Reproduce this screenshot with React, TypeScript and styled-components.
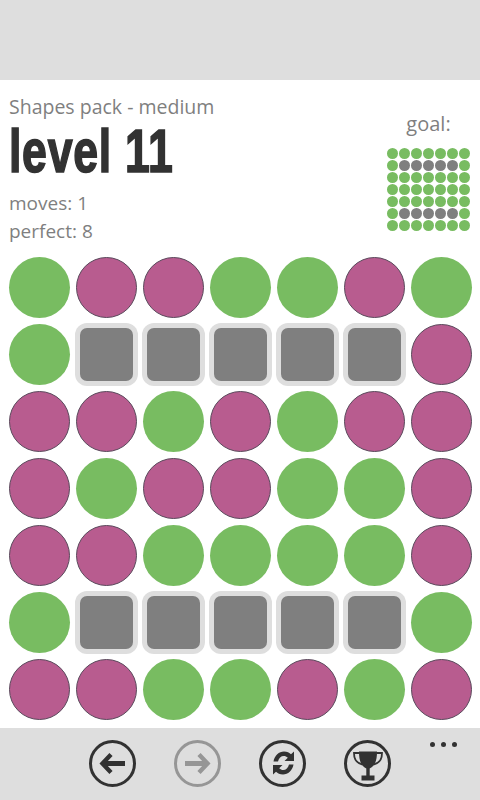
import React from "react";
import styled, { createGlobalStyle } from "styled-components";

const Global = createGlobalStyle`
  html, body { margin: 0; padding: 0; background: #fff; }
  body { font-family: "Open Sans", "Noto Sans", sans-serif; }
`;

const Phone = styled.div`
  width: 480px;
  height: 800px;
  display: flex;
  flex-direction: column;
  overflow: hidden;
  background: #fff;
`;
const StatusBar = styled.div`
  flex: 0 0 80px;
  background: #dedede;
`;
const Content = styled.main`
  flex: 1;
  display: flex;
  flex-direction: column;
`;
const Header = styled.header`
  height: 177px;
  display: flex;
  justify-content: space-between;
  padding: 0 10px 0 9px;
`;
const Info = styled.div`
  display: flex;
  flex-direction: column;
`;
const Pack = styled.div`
  margin-top: 14px;
  font-size: 19.5px;
  line-height: 26px;
  color: #7f7f7f;
`;
const Title = styled.h1`
  margin: 0 0 7px;
  height: 62px;
  font-family: "Liberation Sans", sans-serif;
  font-weight: 700;
  font-size: 62px;
  line-height: 62px;
  letter-spacing: 1px;
  color: #323232;
  -webkit-text-stroke: 1.7px #323232;
  transform: scaleX(0.72);
  transform-origin: left center;
  white-space: nowrap;
`;
const Stat = styled.div`
  font-size: 19px;
  line-height: 28px;
  color: #7f7f7f;
`;
const Goal = styled.aside`
  width: 83px;
  display: flex;
  flex-direction: column;
  align-items: center;
`;
const GoalLabel = styled.div`
  margin-top: 31px;
  font-size: 20px;
  line-height: 26px;
  color: #7f7f7f;
`;
const GoalGrid = styled.div`
  margin-top: 11px;
  display: grid;
  grid-template-columns: repeat(7, 11px);
  gap: 1px;
`;
const Dot = styled.div<{ $kind: Cell }>`
  width: 11px;
  height: 11px;
  border-radius: 50%;
  background: ${({ $kind }) => ($kind === "S" ? "#7f7f7f" : "#78bc61")};
`;
const Board = styled.section`
  display: grid;
  grid-template-columns: repeat(7, 61px);
  grid-auto-rows: 61px;
  gap: 6px;
  padding-left: 9px;
`;
const Circle = styled.div<{ $kind: Cell }>`
  box-sizing: border-box;
  width: 61px;
  height: 61px;
  border-radius: 50%;
  background: ${({ $kind }) => ($kind === "P" ? "#b85c8f" : "#78bc61")};
  border: ${({ $kind }) => ($kind === "P" ? "1.5px solid #5a4a5c" : "none")};
`;
const Square = styled.div`
  box-sizing: border-box;
  width: 53px;
  height: 53px;
  margin: 4px;
  border-radius: 7px;
  background: #7f7f7f;
  box-shadow: 0 0 0 5px #dedede;
`;
const AppBar = styled.nav`
  flex: 0 0 72px;
  position: relative;
  display: flex;
  align-items: flex-start;
  gap: 38px;
  padding: 12px 0 0 89px;
  box-sizing: border-box;
  background: #dedede;
`;
const RoundButton = styled.button<{ $off?: boolean }>`
  width: 47px;
  height: 47px;
  padding: 0;
  border: 0;
  background: none;
  color: ${({ $off }) => ($off ? "#969696" : "#323232")};
`;
const More = styled.div`
  position: absolute;
  top: 14px;
  right: 23px;
  display: flex;
  gap: 6px;
`;
const MoreDot = styled.span`
  width: 5px;
  height: 5px;
  border-radius: 50%;
  background: #323232;
`;

type Cell = "G" | "P" | "S";

const rows = ["GPPGGPG", "GSSSSSP", "PPGPGPP", "PGPPGGP", "PPGGGGP", "GSSSSSG", "PPGGPGP"];
const goal = ["GGGGGGG", "GSSSSSG", "GGGGGGG", "GGGGGGG", "GGGGGGG", "GSSSSSG", "GGGGGGG"];

const Ring: React.FC<{ children: React.ReactNode }> = ({ children }) => (
  <svg width="47" height="47" viewBox="0 0 47 47" fill="none">
    <circle cx="23.5" cy="23.5" r="22" stroke="currentColor" strokeWidth="3" />
    {children}
  </svg>
);

const BackIcon = () => (
  <Ring>
    <path d="M36 23.5H15" stroke="currentColor" strokeWidth="5" />
    <path d="M22 14.5L13.5 23.5L22 32.5" stroke="currentColor" strokeWidth="4.4" />
  </Ring>
);
const ForwardIcon = () => (
  <Ring>
    <path d="M11 23.5H32" stroke="currentColor" strokeWidth="5" />
    <path d="M25 14.5L33.5 23.5L25 32.5" stroke="currentColor" strokeWidth="4.4" />
  </Ring>
);
const SyncIcon = () => (
  <Ring>
    <path
      d="M14.5 21.5C15.5 15.5 20 11.5 25 11.5C28 11.5 30.5 12.8 32 14.2L35 11.5V21H25.5L28.8 17.8C27.5 16.6 26.3 16 24.8 16C22 16 19.8 18 19 21.5Z"
      fill="currentColor"
    />
    <path
      d="M34.5 24.5C33.5 30.5 29 34.5 24 34.5C21 34.5 18.5 33.2 17 31.8L14 34.5V25H23.5L20.2 28.2C21.5 29.4 22.7 30 24.2 30C27 30 29.2 28 30 24.5Z"
      fill="currentColor"
    />
  </Ring>
);
const TrophyIcon = () => (
  <Ring>
    <path
      d="M15 11.5H33C33 19 32 25 25.7 28.5V35.5H30.5V40.5H17.5V35.5H22.3V28.5C16 25 15 19 15 11.5Z"
      fill="currentColor"
    />
    <path
      d="M15.5 13H10C10 19.5 12 23 18.5 24.5M32.5 13H38C38 19.5 36 23 29.5 24.5"
      stroke="currentColor"
      strokeWidth="1.8"
    />
  </Ring>
);

export default function App() {
  return (
    <Phone>
      <Global />
      <StatusBar />
      <Content>
        <Header>
          <Info>
            <Pack>Shapes pack - medium</Pack>
            <Title>level 11</Title>
            <Stat>moves: 1</Stat>
            <Stat>perfect: 8</Stat>
          </Info>
          <Goal>
            <GoalLabel>goal:</GoalLabel>
            <GoalGrid>
              {goal.join("").split("").map((c, i) => (
                <Dot key={i} $kind={c as Cell} />
              ))}
            </GoalGrid>
          </Goal>
        </Header>
        <Board>
          {rows.join("").split("").map((c, i) =>
            c === "S" ? <Square key={i} /> : <Circle key={i} $kind={c as Cell} />
          )}
        </Board>
      </Content>
      <AppBar>
        <RoundButton><BackIcon /></RoundButton>
        <RoundButton $off><ForwardIcon /></RoundButton>
        <RoundButton><SyncIcon /></RoundButton>
        <RoundButton><TrophyIcon /></RoundButton>
        <More>
          <MoreDot />
          <MoreDot />
          <MoreDot />
        </More>
      </AppBar>
    </Phone>
  );
}
